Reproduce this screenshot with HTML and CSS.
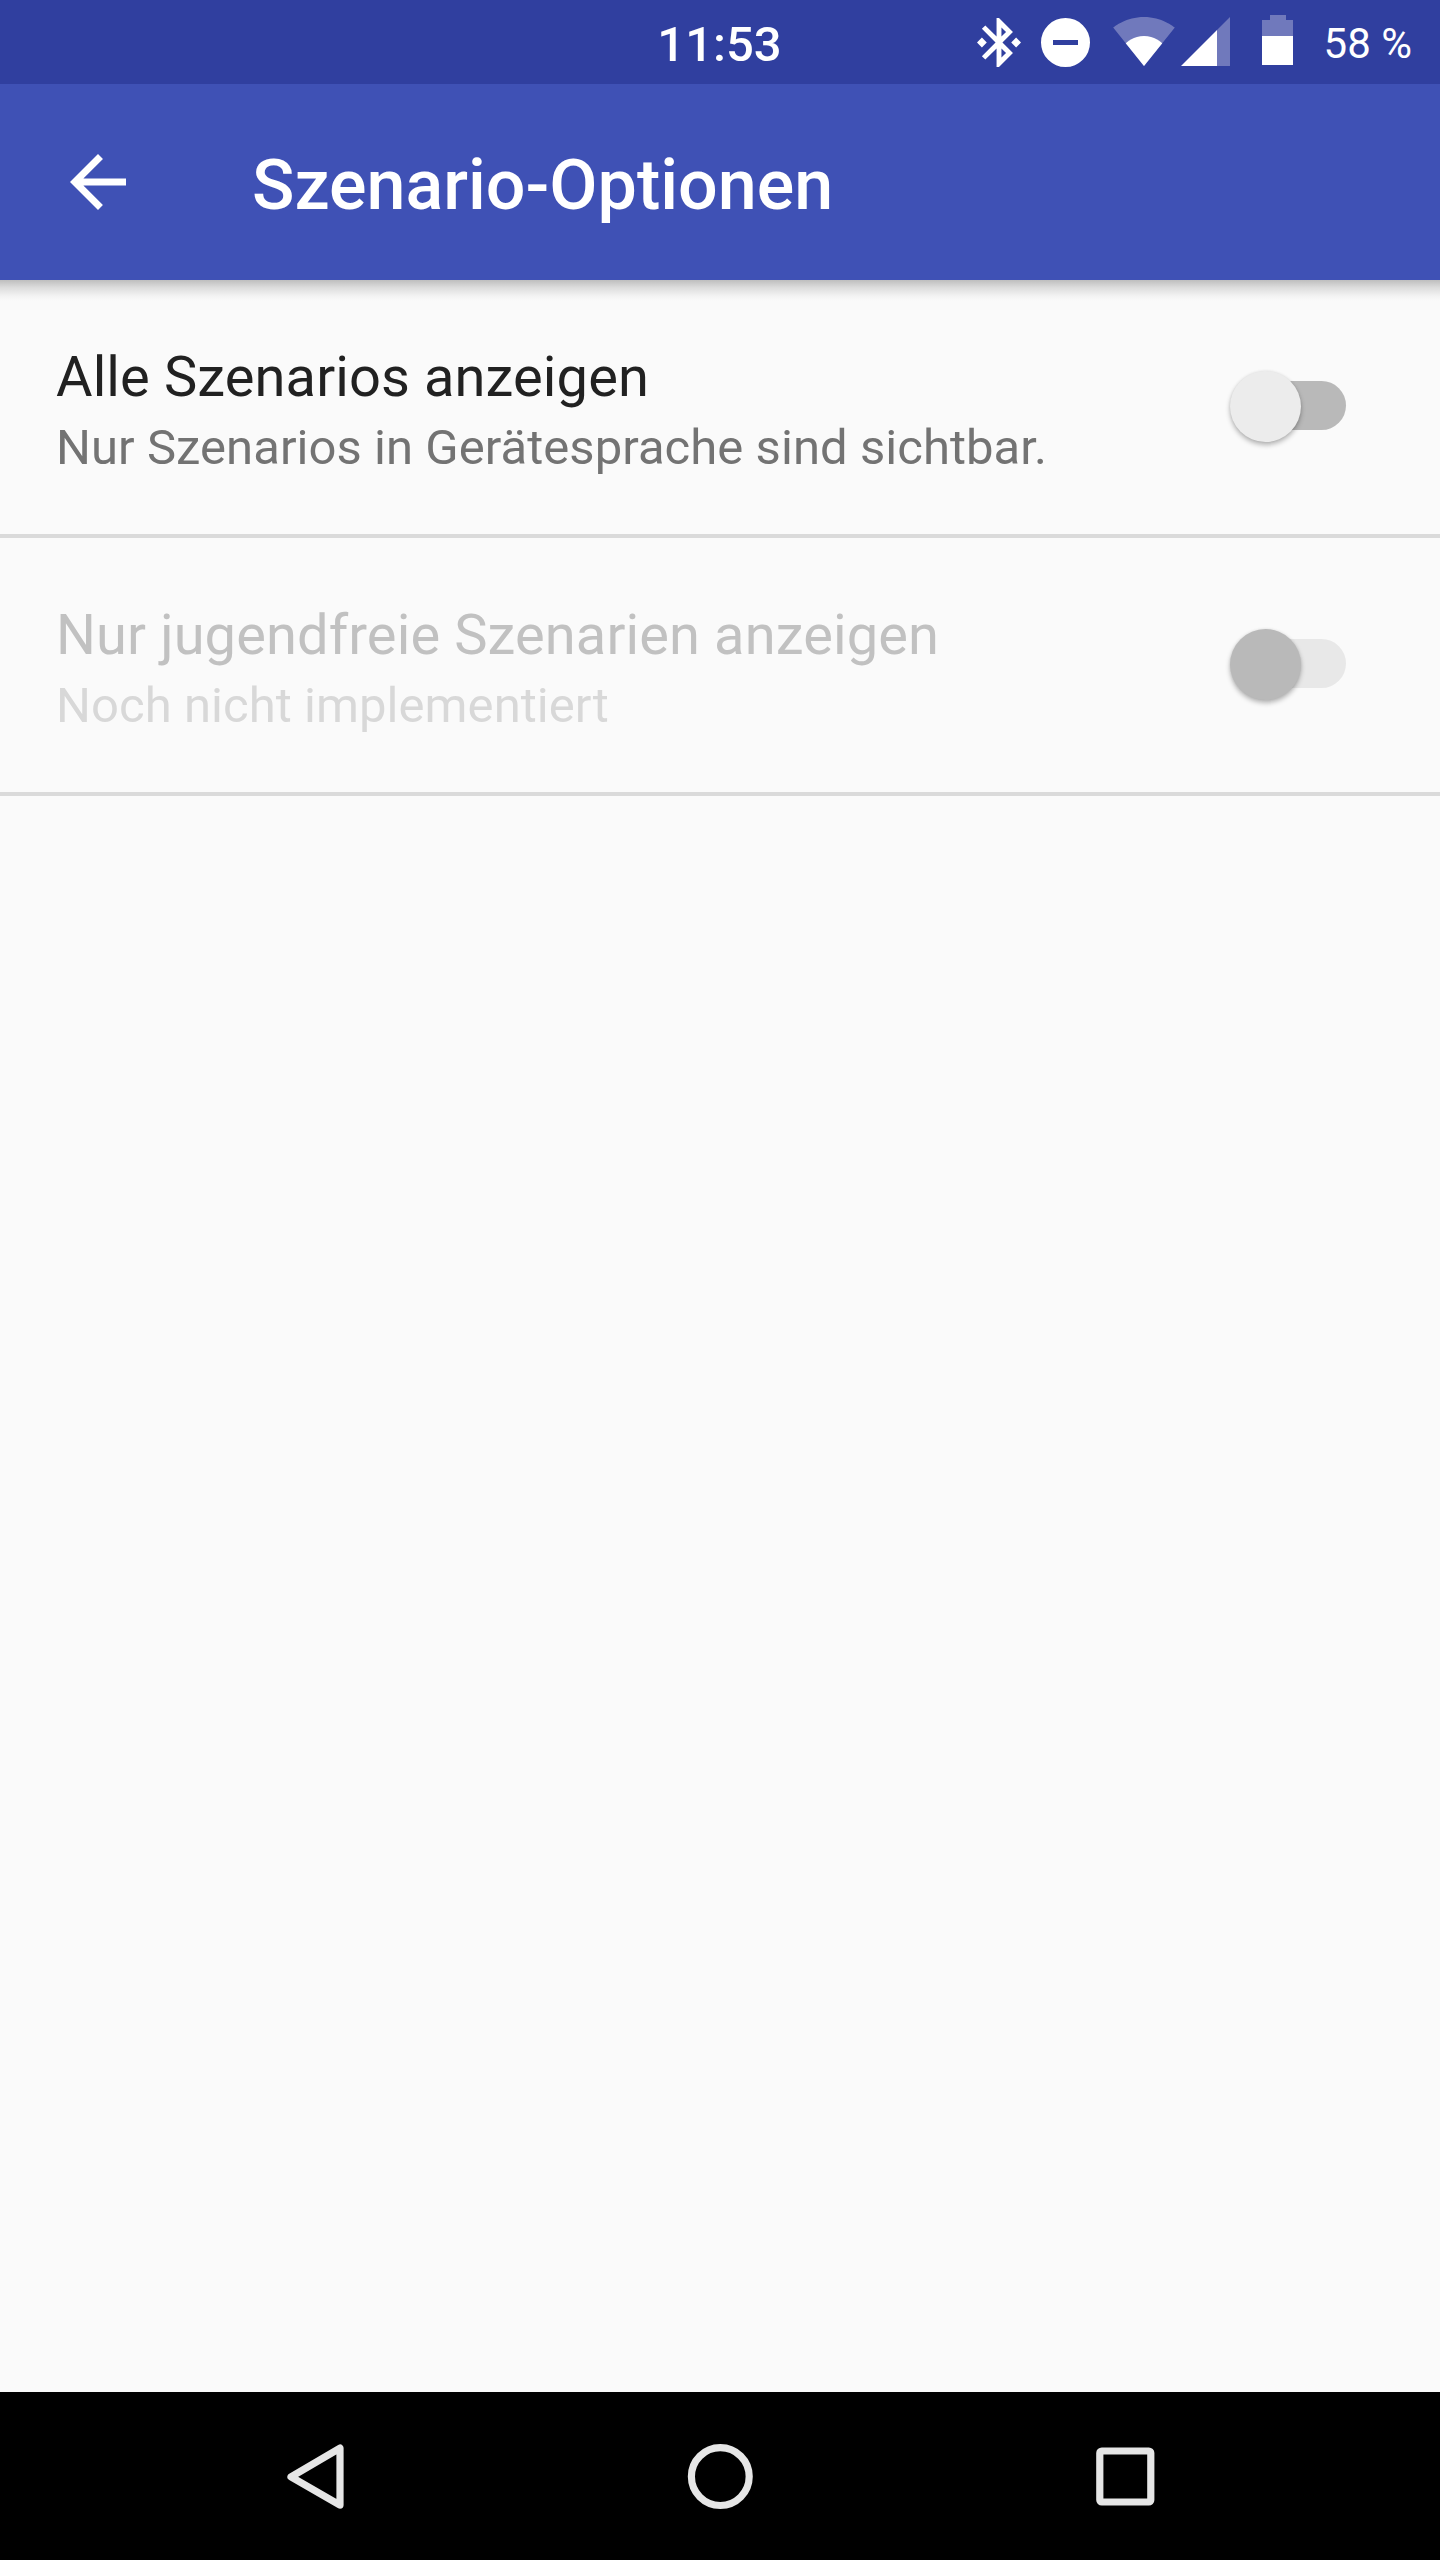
FILE: index.html
```html
<!DOCTYPE html>
<html lang="de">
<head>
<meta charset="utf-8">
<title>Szenario-Optionen</title>
<link rel="stylesheet" href="styles.css">
</head>
<body>
<div class="screen">
  <div class="status">
    <span class="clock">11:53</span>
    <div class="indicators">
      <svg class="bluetooth" viewBox="3 2 18 20"><path d="M7 12l-2-2-2 2 2 2 2-2zm10.71-4.29L12 2h-1v7.59L6.41 5 5 6.41 10.59 12 5 17.59 6.41 19 11 14.41V22h1l5.71-5.71-4.3-4.29 4.3-4.29zM13 5.83l1.88 1.88L13 9.59V5.83zm1.88 10.46L13 18.17v-3.76l1.88 1.88zM19 10l-2 2 2 2 2-2-2-2z"/></svg>
      <svg class="dnd" viewBox="0 0 49 49"><path fill-rule="evenodd" d="M24.5 0a24.5 24.5 0 1 0 0 49a24.5 24.5 0 1 0 0-49zM12 22h25v5H12z"/></svg>
      <svg class="wifi" viewBox="0.36 3 23.28 18.5"><path class="dim" d="M12.01 21.49L23.64 7c-.45-.34-4.93-4-11.64-4C5.28 3 .81 6.66.36 7l11.63 14.49.01.01z"/><path d="M5.1 12.9L12 21.5l6.9-8.6C18.5 12.5 15.9 10.15 12 10.15S5.5 12.5 5.1 12.9z"/></svg>
      <svg class="signal" viewBox="0 0 49 49"><path class="dim" d="M49 0v49H36V13z"/><path d="M36 13v36H0z"/></svg>
      <svg class="battery" viewBox="0 0 31 50"><path class="dim" d="M8 0h16v5h7v16H0V5h8z"/><path d="M0 21h31v29H0z"/></svg>
      <span class="percent">58 %</span>
    </div>
  </div>
  <header class="toolbar">
    <svg class="back" viewBox="0 0 24 24"><path d="M20 11H7.83l5.59-5.59L12 4l-8 8 8 8 1.41-1.41L7.83 13H20v-2z"/></svg>
    <h1 class="heading">Szenario-Optionen</h1>
  </header>
  <main class="options">
    <div class="row">
      <div class="labels">
        <div class="name">Alle Szenarios anzeigen</div>
        <div class="summary">Nur Szenarios in Gerätesprache sind sichtbar.</div>
      </div>
      <div class="switch"><div class="thumb"></div></div>
    </div>
    <div class="row disabled">
      <div class="labels">
        <div class="name">Nur jugendfreie Szenarien anzeigen</div>
        <div class="summary">Noch nicht implementiert</div>
      </div>
      <div class="switch"><div class="thumb"></div></div>
    </div>
  </main>
  <nav class="navbar">
    <svg viewBox="0 0 66 66"><path d="M57 4.1v57L8 32.9z"/></svg>
    <svg viewBox="0 0 66 66"><circle cx="33.3" cy="32.6" r="28.9"/></svg>
    <svg viewBox="0 0 66 66"><rect x="8.8" y="7" width="51" height="51" rx="2"/></svg>
  </nav>
</div>
</body>
</html>
```

FILE: styles.css
```css
body {
  margin: 0;
  font-family: Roboto, "Liberation Sans", sans-serif;
  -webkit-font-smoothing: antialiased;
}

.screen {
  display: flex;
  flex-direction: column;
  width: 1440px;
  height: 2560px;
  background: #fafafa;
}

svg {
  display: block;
  flex: none;
}

.status {
  display: grid;
  grid-template-columns: 1fr auto 1fr;
  height: 84px;
  background: #303f9f;
  color: #fff;
}

.clock {
  grid-column: 2;
  margin-right: 1px;
  font-size: 49px;
  font-weight: 500;
  line-height: 89px;
}

.indicators {
  display: flex;
  align-items: flex-start;
  justify-content: flex-end;
  padding-right: 28px;
  fill: #fff;
}

.dim {
  fill: #7079bc;
}

.bluetooth {
  width: 44px;
  height: 49px;
  margin: 18px 20px 0 0;
}

.dnd {
  width: 49px;
  height: 49px;
  margin: 18px 23px 0 0;
}

.wifi {
  width: 62px;
  height: 49px;
  margin: 17px 6px 0 0;
}

.signal {
  width: 49px;
  height: 49px;
  margin: 17px 32px 0 0;
}

.battery {
  width: 31px;
  height: 50px;
  margin: 15px 31px 0 0;
}

.percent {
  font-size: 42px;
  line-height: 88px;
  white-space: nowrap;
}

.toolbar {
  position: relative;
  display: flex;
  align-items: center;
  height: 196px;
  padding-left: 56px;
  background: #3f51b5;
  color: #fff;
}

.toolbar::after {
  content: "";
  position: absolute;
  top: 100%;
  left: 0;
  width: 100%;
  height: 21px;
  background: linear-gradient(rgba(0, 0, 0, 0.24), rgba(0, 0, 0, 0.12) 35%, rgba(0, 0, 0, 0.03) 75%, transparent);
}

.back {
  width: 84px;
  height: 84px;
  fill: #fff;
}

.heading {
  margin: 6px 0 0 112px;
  font-size: 70px;
  font-weight: 500;
  line-height: 84px;
}

.options {
  flex: 1;
}

.row {
  display: flex;
  justify-content: space-between;
  height: 254px;
  padding: 0 94px 0 56px;
  border-bottom: 4px solid #dadada;
}

.labels {
  padding-top: 60px;
}

.name {
  font-size: 56px;
  line-height: 74px;
  letter-spacing: 0.11px;
  color: #212121;
}

.summary {
  font-size: 49px;
  line-height: 68px;
  letter-spacing: 0.05px;
  color: #737373;
}

.switch {
  width: 98px;
  height: 49px;
  margin-top: 101px;
  border-radius: 25px;
  background: #b9b9b9;
}

.thumb {
  width: 71px;
  height: 71px;
  margin: -10px 0 0 -18px;
  border-radius: 50%;
  background: #ececec;
  box-shadow: 0 3px 5px rgba(0, 0, 0, 0.28), 0 0 3px rgba(0, 0, 0, 0.08);
}

.disabled .name {
  color: #c1c1c1;
}

.disabled .summary {
  color: #d8d8d8;
}

.disabled .switch {
  background: #e8e8e8;
}

.disabled .thumb {
  background: #b9b9b9;
}

.navbar {
  display: flex;
  gap: 338px;
  height: 116px;
  padding: 52px 0 0 283px;
  background: #000;
}

.navbar svg {
  width: 66px;
  height: 66px;
  fill: none;
  stroke: #e6e6e6;
  stroke-width: 7.2;
  stroke-linejoin: round;
}
```
